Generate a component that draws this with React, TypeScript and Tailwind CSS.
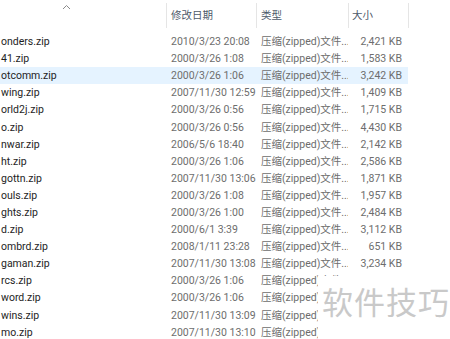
import { useState } from "react";

const files = [
  ["onders.zip", "2010/3/23 20:08", "2,421 KB"],
  ["41.zip", "2000/3/26 1:08", "1,583 KB"],
  ["otcomm.zip", "2000/3/26 1:06", "3,242 KB"],
  ["wing.zip", "2007/11/30 12:59", "1,409 KB"],
  ["orld2j.zip", "2000/3/26 0:56", "1,715 KB"],
  ["o.zip", "2000/3/26 0:56", "4,430 KB"],
  ["nwar.zip", "2006/5/6 18:40", "2,142 KB"],
  ["ht.zip", "2000/3/26 1:06", "2,586 KB"],
  ["gottn.zip", "2007/11/30 13:06", "1,871 KB"],
  ["ouls.zip", "2000/3/26 1:08", "1,957 KB"],
  ["ghts.zip", "2000/3/26 1:00", "2,484 KB"],
  ["d.zip", "2000/6/1 3:39", "3,112 KB"],
  ["ombrd.zip", "2008/1/11 23:28", "651 KB"],
  ["gaman.zip", "2007/11/30 13:08", "3,234 KB"],
  ["rcs.zip", "2000/3/26 1:06", ""],
  ["word.zip", "2000/3/26 1:06", ""],
  ["wins.zip", "2007/11/30 13:09", ""],
  ["mo.zip", "2007/11/30 13:10", ""],
];

const App = () => {
  const [hovered, setHovered] = useState(2);

  return (
    <div className="relative w-[450px] h-[339px] overflow-hidden bg-white text-[10.5px] font-['Roboto','Noto_Sans_CJK_SC',sans-serif]">
      {/* Column headers */}
      <div className="grid grid-cols-[166px_90px_92px_61px] h-[33px] items-start">
        <div className="relative h-full">
          <svg className="absolute left-[62px] top-[4px] w-[9px] h-[6px]" viewBox="0 0 9 6" fill="none" stroke="#8a8a8a" strokeWidth="1">
            <path d="M1 5l3.5-3.5L8 5" />
          </svg>
        </div>
        <div className="border-l border-[#e5e5e5] h-[25px] mt-[3px] pl-[4px] pt-[5px] text-[#4d5a6a]">修改日期</div>
        <div className="border-l border-[#e5e5e5] h-[25px] mt-[3px] pl-[4px] pt-[5px] text-[#4d5a6a]">类型</div>
        <div className="border-l border-r border-[#e5e5e5] h-[25px] mt-[3px] pl-[3px] pt-[5px] text-[#4d5a6a]">大小</div>
      </div>

      {/* File rows */}
      <div className="flex flex-col">
        {files.map(([name, date, size], i) => (
          <div
            key={name}
            onMouseEnter={() => setHovered(i)}
            className={`grid grid-cols-[166px_90px_92px_60px] w-[408px] h-[17.1px] items-center leading-[17px] ${
              hovered === i ? "bg-[#e5f3ff]" : ""
            }`}
          >
            <div className="pl-[1px] text-[#1e1e1e] whitespace-nowrap overflow-hidden">{name}</div>
            <div className="pl-[5px] text-[#6d6d6d] whitespace-nowrap">{date}</div>
            <div className="pl-[5px] text-[#6d6d6d] whitespace-nowrap overflow-hidden">压缩(zipped)文件...</div>
            <div className="pr-[6px] text-right text-[#6d6d6d] whitespace-nowrap">{size}</div>
          </div>
        ))}
      </div>

      {/* Watermark */}
      <div className="absolute left-[318px] top-[276px] right-0 bottom-0 bg-white pl-[4px] pt-[9px]">
        <span className="text-[31px] leading-none tracking-[1px] text-[#c9c9c9] whitespace-nowrap font-['Noto_Sans_CJK_SC',sans-serif]">软件技巧</span>
      </div>
    </div>
  );
};

export default App;
